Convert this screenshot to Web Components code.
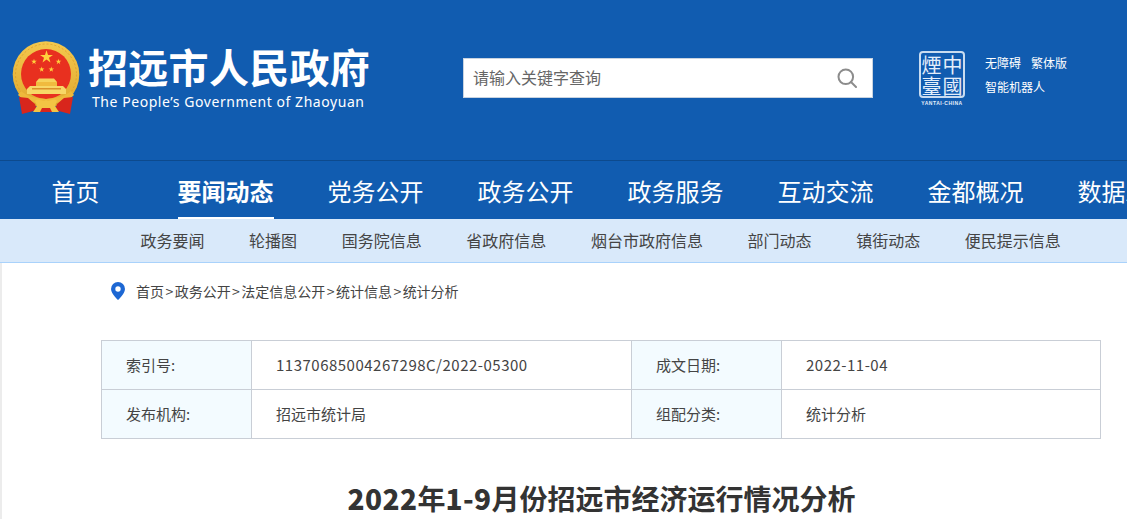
<!DOCTYPE html>
<html lang="zh"><head><meta charset="utf-8">
<style>
html,body{margin:0;padding:0;background:#fff}
body{width:1127px;height:519px;overflow:hidden;font-family:"Noto Sans CJK SC","Noto Sans",sans-serif;display:block}
</style></head><body>
<site-header></site-header>
<main-nav>
<nav-item class="first">首页</nav-item><nav-item active>要闻动态</nav-item><nav-item>党务公开</nav-item><nav-item>政务公开</nav-item><nav-item>政务服务</nav-item><nav-item>互动交流</nav-item><nav-item>金都概况</nav-item><nav-item>数据发布</nav-item>
</main-nav>
<sub-nav>
<span>政务要闻</span><span>轮播图</span><span>国务院信息</span><span>省政府信息</span><span>烟台市政府信息</span><span>部门动态</span><span>镇街动态</span><span>便民提示信息</span>
</sub-nav>
<page-body>
<bread-crumb>首页<i>&gt;</i>政务公开<i>&gt;</i>法定信息公开<i>&gt;</i>统计信息<i>&gt;</i>统计分析</bread-crumb>
<meta-table>
<span>索引号:</span><span class="num">11370685004267298C/2022-05300</span><span>成文日期:</span><span class="num">2022-11-04</span>
<span>发布机构:</span><span>招远市统计局</span><span>组配分类:</span><span>统计分析</span>
</meta-table>
<doc-title><b>2022</b>年<b>1-9</b>月份招远市经济运行情况分析</doc-title>
</page-body>
<script>
function def(name,html){customElements.define(name,class extends HTMLElement{constructor(){super();this.attachShadow({mode:'open'}).innerHTML=html}})}
const star=(cx,cy,r,rot=0)=>{let p=[];for(let i=0;i<10;i++){const a=(-90+rot+i*36)*Math.PI/180,q=i%2?r*.382:r;p.push((cx+q*Math.cos(a)).toFixed(2)+','+(cy+q*Math.sin(a)).toFixed(2))}return `<polygon points="${p.join(' ')}" fill="#ffd23c"/>`};
const emblem=`<svg width="68" height="74" viewBox="0 0 68 74" aria-hidden="true">
<defs><linearGradient id="g" x1="0" y1="0" x2="0" y2="1"><stop offset="0" stop-color="#f4c84e"/><stop offset="1" stop-color="#e0a82e"/></linearGradient></defs>
<circle cx="34" cy="33.500" r="33.300" fill="url(#g)"/>
<circle cx="34" cy="33.500" r="30.500" fill="none" stroke="#d99a28" stroke-width=".8" stroke-dasharray="2 2"/>
<circle cx="34" cy="33" r="25" fill="#e8301f"/>
${star(34.500,16,6.800)}${star(22,20.700,3)}${star(46.500,20.700,3)}${star(29.700,28.300,2.900)}${star(39.300,28.300,2.900)}
<path d="M27 37.500h15l3 3.500H24z" fill="#f6d25c"/>
<path d="M24 41h21v4H24z" fill="#f0bb3e"/>
<path d="M18 45h33l3 3v5H15v-5z" fill="#f7d767"/>
<path d="M20 47h29v1.500H20z" fill="#d9912a"/>
<path d="M9 50c7 6 15 7 25 8 10-1 18-2 25-8l3 4c-6 7-16 8-28 9-12-1-22-2-28-9z" fill="#eeb93c"/>
<path d="M7 56l9 1 7 6 2 6-15 4zM61 56l-9 1-7 6-2 6 15 4z" fill="#d8261c"/>
<path d="M23 60c4-4 7 2 11-1 4 3 7-3 11 1l-2 5 4 6H21l4-6z" fill="#f3c444"/>
<path d="M30 67h8l2 4H28z" fill="#d8261c"/>
</svg>`;
def('state-emblem',`<style>:host{display:block;width:68px;height:74px;flex:none}svg{display:block}</style>${emblem}`);
def('site-logo',`<style>
:host{display:flex;align-items:flex-start;gap:9px;color:#fff}
.t{display:flex;flex-direction:column}
.cn{font:700 40px/50px "Noto Sans CJK SC",sans-serif;height:50px;letter-spacing:.3px;white-space:nowrap;margin-left:-1px}
.en{font:400 14px/18px "Noto Sans","Open Sans",sans-serif;letter-spacing:.55px;margin-left:3px;margin-top:2px;white-space:nowrap}
</style><state-emblem></state-emblem><div class="t"><div class="cn">招远市人民政府</div><div class="en">The People’s Government of Zhaoyuan</div></div>`);
def('search-box',`<style>
:host{display:flex;box-sizing:border-box;width:410px;height:40px;background:#fff;border:1px solid #c8d3e0;align-items:center;justify-content:space-between;padding:0 15px 0 9px}
span{font-size:16px;color:#666;line-height:1;margin-top:-2px}
svg{display:block}
</style><span>请输入关键字查询</span><svg width="20" height="20" viewBox="0 0 20 20" fill="none" stroke="#8c8c8c" stroke-width="2"><circle cx="8.800" cy="8.800" r="7.300"/><path d="M14 14l5 5" stroke-linecap="round"/></svg>`);
def('city-seal',`<style>
:host{display:flex;flex-direction:column;align-items:center;width:46px;color:#e4eefa}
.b{box-sizing:border-box;width:46px;height:47px;border:2px solid #c9dcf0;border-radius:4px;display:grid;grid-template-columns:21px 21px;justify-content:center;grid-auto-rows:21px;align-content:center;font:400 20px/21px "Noto Sans CJK TC",sans-serif;text-align:center}
.b span{display:block;height:21px}
.c{font:700 5px/6px "Liberation Sans",sans-serif;letter-spacing:.5px;margin-top:2px;white-space:nowrap}
</style><div class="b"><span>煙</span><span>中</span><span>臺</span><span>國</span></div><div class="c">YANTAI·CHINA</div>`);
def('tool-links',`<style>
:host{display:grid;grid-template-columns:auto auto;justify-content:start;column-gap:10px;row-gap:5px;font-size:12px;line-height:19px;color:#fff;width:100px}
.w{grid-column:1/3}
</style><span>无障碍</span><span>繁体版</span><span class="w">智能机器人</span>`);
def('site-header',`<style>
:host{display:block;height:160px;background:#115cb0;box-sizing:border-box}
.r{display:flex;align-items:flex-start;height:160px}
site-logo{margin:41px 0 0 12px;width:425px;flex:none}
search-box{margin:58px 0 0 26px;flex:none}
city-seal{margin:51px 0 0 46px;flex:none}
tool-links{margin:53px 0 0 20px;flex:none}
</style><div class="r"><site-logo></site-logo><search-box></search-box><city-seal></city-seal><tool-links></tool-links></div>`);
def('nav-item',`<style>
:host{display:block;flex:none;box-sizing:border-box;height:58px;line-height:60px;font-size:24px;color:#fff;white-space:nowrap;margin-right:54px}
:host(.first){margin-right:78px}
:host([active]){font-weight:700;border-bottom:2px solid #fff}
</style><slot></slot>`);
def('main-nav',`<style>
:host{display:flex;height:58px;background:#115cb0;border-top:1px solid #0d4a8d;padding-left:51.500px;overflow:hidden}
</style><slot></slot>`);
def('sub-nav',`<style>
:host{display:flex;box-sizing:border-box;height:44px;background:#d9e9fa;border-bottom:1px solid #a9d2fb;padding:0 0 2px 140.500px;gap:44.600px;align-items:center;font-size:16px;color:#444;white-space:nowrap}
</style><slot></slot>`);
def('page-body',`<style>
:host{display:block;height:256px;box-sizing:border-box;border-left:2px solid #ececec;overflow:hidden}
</style><slot></slot>`);
def('bread-crumb',`<style>
:host{display:flex;align-items:center;gap:10px;margin:16px 0 0 108px;height:24px;font-size:14px;color:#444;white-space:nowrap}
svg{display:block;flex:none}
::slotted(i){font-style:normal;margin:0 1.450px}
</style><svg width="16" height="18" viewBox="0 0 16 18"><path d="M8 0a7 7 0 0 0-7 7c0 4.600 7 11 7 11s7-6.400 7-11a7 7 0 0 0-7-7z" fill="#1d67d3"/><circle cx="8" cy="7" r="2.700" fill="#fff"/></svg><span><slot></slot></span>`);
def('meta-table',`<style>
:host{display:grid;box-sizing:border-box;grid-template-columns:150px 380px 150px 1fr;grid-auto-rows:49px;width:1000px;margin:37px 0 0 99px;border:1px solid #c9ced6;border-width:1px 1px 0 1px;font-size:15px;color:#444}
::slotted(span){display:flex;align-items:center;box-sizing:border-box;border-bottom:1px solid #c9ced6;border-right:1px solid #c9ced6;padding:0 0 2px 24px;white-space:nowrap}
::slotted(span:nth-child(odd)){background:#f3fbff}
::slotted(span:nth-child(4n)){border-right:0}
::slotted(.num){letter-spacing:.5px}
</style><slot></slot>`);
def('doc-title',`<style>
:host{display:block;text-align:center;margin:39px 0 0 0;padding-left:74px;font-size:28px;line-height:40px;font-weight:700;color:#333;white-space:nowrap}
::slotted(b){letter-spacing:.45px}
</style><slot></slot>`);
</script>
</body></html>
